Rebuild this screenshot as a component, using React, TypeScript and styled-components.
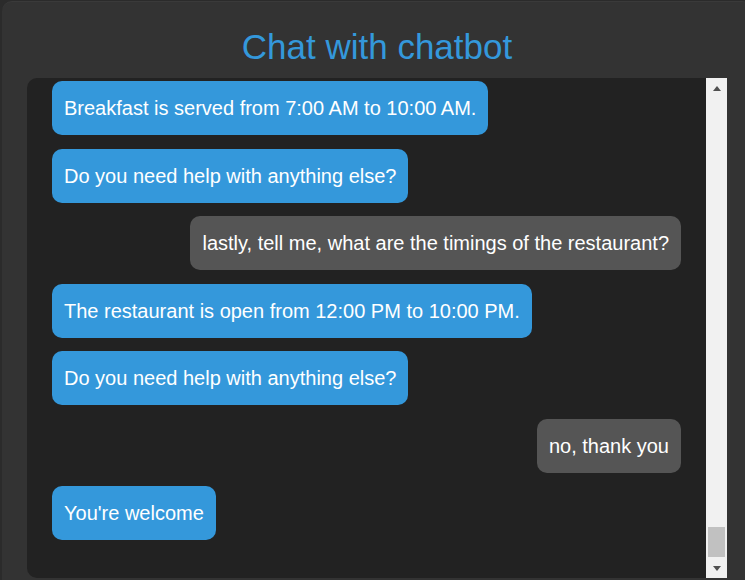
import React from 'react';
import styled, { createGlobalStyle } from 'styled-components';

const GlobalStyle = createGlobalStyle`
  html, body {
    margin: 0;
    padding: 0;
    background: #2b2b2b;
    font-family: Arial, "Liberation Sans", sans-serif;
    overflow: hidden;
  }
`;

const Page = styled.div`
  width: 745px;
  height: 580px;
  overflow: hidden;
`;

const Card = styled.div`
  margin: 1px 0 0 2px;
  width: 700px;
  padding: 0 25px 25px;
  background: #333;
  border-radius: 10px;
  border-top: 1px solid #3a3a3a;
`;

const Title = styled.h1`
  margin: 0;
  padding: 25px 0 11px;
  text-align: center;
  font-size: 35px;
  font-weight: 400;
  line-height: 40px;
  color: #3498db;
`;

const ChatBox = styled.div`
  display: flex;
  height: 500px;
  background: #222;
  border-radius: 10px 0 0 10px;
  overflow: hidden;
`;

const Messages = styled.div`
  flex: 1;
  display: flex;
  flex-direction: column;
  gap: 13.5px;
  padding: 3px 25px 0;
  overflow: hidden;
`;

const Bubble = styled.div<{ $from: 'bot' | 'user' }>`
  align-self: ${p => (p.$from === 'bot' ? 'flex-start' : 'flex-end')};
  background: ${p => (p.$from === 'bot' ? '#3498db' : '#555')};
  color: #fff;
  font-size: 20px;
  line-height: 24px;
  padding: 15px 12px;
  border-radius: 10px;
  white-space: nowrap;
`;

const ScrollBar = styled.div`
  width: 21px;
  display: flex;
  flex-direction: column;
  background: #f1f1f1;
`;

const Arrow = styled.div<{ $dir: 'up' | 'down' }>`
  height: 20px;
  display: flex;
  align-items: center;
  justify-content: center;

  &::after {
    content: '';
    width: 0;
    height: 0;
    border-left: 4.5px solid transparent;
    border-right: 4.5px solid transparent;
    ${p =>
      p.$dir === 'up'
        ? 'border-bottom: 5px solid #505050;'
        : 'border-top: 5px solid #505050;'}
  }
`;

const Track = styled.div`
  flex: 1;
  display: flex;
  flex-direction: column;
  justify-content: flex-end;
  padding: 0 2px 1px;
`;

const Thumb = styled.div`
  height: 30px;
  background: #c1c1c1;
`;

type Msg = { from: 'bot' | 'user'; text: string };

const messages: Msg[] = [
  { from: 'bot', text: 'Breakfast is served from 7:00 AM to 10:00 AM.' },
  { from: 'bot', text: 'Do you need help with anything else?' },
  { from: 'user', text: 'lastly, tell me, what are the timings of the restaurant?' },
  { from: 'bot', text: 'The restaurant is open from 12:00 PM to 10:00 PM.' },
  { from: 'bot', text: 'Do you need help with anything else?' },
  { from: 'user', text: 'no, thank you' },
  { from: 'bot', text: "You're welcome" },
];

export default function App() {
  return (
    <Page>
      <GlobalStyle />
      <Card>
        <Title>Chat with chatbot</Title>
        <ChatBox>
          <Messages>
            {messages.map((m, i) => (
              <Bubble key={i} $from={m.from}>
                {m.text}
              </Bubble>
            ))}
          </Messages>
          <ScrollBar>
            <Arrow $dir="up" />
            <Track>
              <Thumb />
            </Track>
            <Arrow $dir="down" />
          </ScrollBar>
        </ChatBox>
      </Card>
    </Page>
  );
}
